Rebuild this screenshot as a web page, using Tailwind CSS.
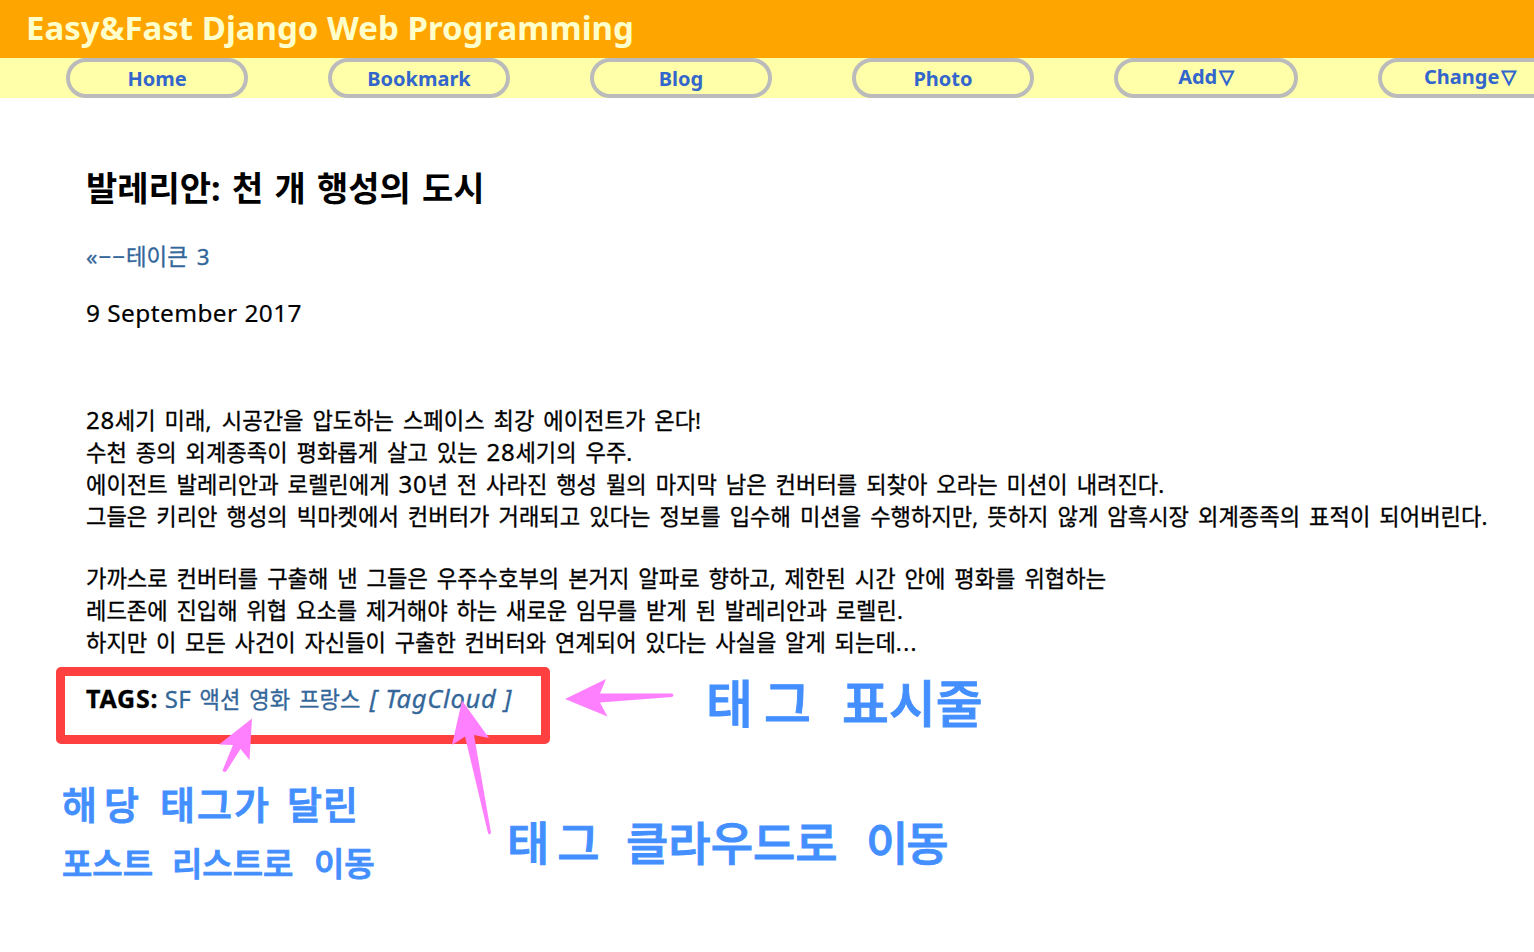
<!DOCTYPE html>
<html lang="ko">
<head>
<meta charset="utf-8">
<title>Easy&amp;Fast Django Web Programming</title>
<script src="https://cdn.jsdelivr.net/npm/@tailwindcss/browser@4"></script>
</head>
<body class="bg-white text-black font-['Noto_Sans','Noto_Sans_CJK_KR',sans-serif] relative w-[1534px] h-[952px] overflow-hidden whitespace-nowrap">
<header class="h-[58px] bg-[#ffa500] pl-[26px]">
  <h1 class="text-[33px] leading-[56px] font-bold text-[#ffffcc]">Easy&amp;Fast Django Web Programming</h1>
</header>
<nav class="h-10 bg-[#ffffaa] pl-[66px] flex gap-20 text-[20px] font-bold text-[#3366cc] leading-[34px] overflow-hidden">
  <a class="w-[182px] h-10 shrink-0 border-4 border-[#bbb] rounded-[20px] text-center">Home</a>
  <a class="w-[182px] h-10 shrink-0 border-4 border-[#bbb] rounded-[20px] text-center">Bookmark</a>
  <a class="w-[182px] h-10 shrink-0 border-4 border-[#bbb] rounded-[20px] text-center">Blog</a>
  <a class="w-[182px] h-10 shrink-0 border-4 border-[#bbb] rounded-[20px] text-center">Photo</a>
  <a class="w-[184px] h-10 shrink-0 border-4 border-[#bbb] rounded-[20px] text-center leading-[30px]">Add<span class="font-['DejaVu_Sans'] text-[19px] leading-none pl-0.5 relative -top-px [-webkit-text-stroke:1px]">▽</span></a>
  <a class="w-[184px] h-10 shrink-0 border-4 border-[#bbb] rounded-[20px] text-center leading-[30px]">Change<span class="font-['DejaVu_Sans'] text-[19px] leading-none pl-0.5 relative -top-px [-webkit-text-stroke:1px]">▽</span></a>
</nav>
<main class="pl-[86px] pt-[66px]">
  <h2 class="h-12 leading-[48px] text-[34px] font-bold [word-spacing:2.4px]">발레리안: 천 개 행성의 도시</h2>
  <p class="mt-[29px] h-8 leading-8 text-[22.4px] text-[#336699] [word-spacing:3px] [-webkit-text-stroke:0.3px]"><span class="tracking-[1px]">«−−</span>테이큰 3</p>
  <p class="mt-6 h-8 leading-8 text-[24.4px] tracking-[0.45px] [-webkit-text-stroke:0.2px]">9 September 2017</p>
  <div class="mt-[76px] text-[22.2px] leading-8 [word-spacing:3.15px] [-webkit-text-stroke:0.3px]">
    <p class="h-8"><span class="text-[24px] leading-none tracking-[0.7px]">28</span>세기 미래<span class="tracking-[1.5px]">,</span> 시공간을 압도하는 스페이스 최강 에이전트가 온다!</p>
    <p class="h-8">수천 종의 외계종족이 평화롭게 살고 있는 <span class="text-[24px] leading-none tracking-[0.7px]">28</span>세기의 우주.</p>
    <p class="h-8">에이전트 발레리안과 로렐린에게 <span class="text-[24px] leading-none tracking-[0.7px]">30</span>년 전 사라진 행성 뮐의 마지막 남은 컨버터를 되찾아 오라는 미션이 내려진다.</p>
    <p class="h-8 [word-spacing:3.25px]">그들은 키리안 행성의 빅마켓에서 컨버터가 거래되고 있다는 정보를 입수해 미션을 수행하지만, 뜻하지 않게 암흑시장 외계종족의 표적이 되어버린다.</p>
    <p class="h-8 mt-[30px]">가까스로 컨버터를 구출해 낸 그들은 우주수호부의 본거지 알파로 향하고, 제한된 시간 안에 평화를 위협하는</p>
    <p class="h-8 [word-spacing:3px]">레드존에 진입해 위협 요소를 제거해야 하는 새로운 임무를 받게 된 발레리안과 로렐린.</p>
    <p class="h-8 [word-spacing:2.9px]">하지만 이 모든 사건이 자신들이 구출한 컨버터와 연계되어 있다는 사실을 알게 되는데<span class="tracking-[1.4px]">...</span></p>
  </div>
  <p class="mt-6 h-8 leading-8 text-[24px] text-[#336699] [-webkit-text-stroke:0.3px]"><b class="text-black text-[25px] leading-none tracking-[0.8px]">TAGS:</b> <span class="tracking-[0.5px]">SF</span> <span class="text-[22.2px] leading-none [word-spacing:3.2px] pl-0.5 pr-[3px]">액션 영화 프랑스</span> <i class="text-[25.5px] leading-none tracking-[0.75px]">[ TagCloud ]</i></p>
</main>
<div class="absolute left-[56px] top-[667px] w-[494px] h-[77px] border-[9px] border-[#ff4040] rounded-[5px]"></div>
<div class="text-[#448fff] font-medium leading-[60px] [-webkit-text-stroke:1px] [stroke-linejoin:round]">
  <p class="absolute left-[706px] top-[673px] text-[51px] flex"><span class="w-[136px] tracking-[11px]">태그</span><span>표시줄</span></p>
  <p class="absolute left-[507px] top-[812px] text-[46px] flex"><span class="w-[119px] tracking-[8px]">태그</span><span class="w-[240px]">클라우드로</span><span class="tracking-[-2px]">이동</span></p>
  <p class="absolute left-[62px] top-[774px] text-[38px] flex"><span class="w-[98px] tracking-[7px]">해당</span><span class="w-[127px] tracking-[2px]">태그가</span><span class="tracking-[1px]">달린</span></p>
  <p class="absolute left-[62px] top-[834px] text-[33px] flex"><span class="w-[110px]">포스트</span><span class="w-[142px]">리스트로</span><span>이동</span></p>
</div>
<svg class="absolute left-0 top-0" width="1534" height="952" fill="#ff80ff">
  <path d="M565 699 606 679 600 693.500 672 693.500Q675 695 672 697L600 702.500 607.500 716.500Z"/>
  <path d="M252 718.500 219 744.500 233 745 222.500 770.500Q224 773 226.500 771L240.500 749 249.500 760Z"/>
  <path d="M462 700.500 452 745 465 736.500 488 833Q490 836 491 832.500L474 735 489 738Z"/>
</svg>
</body>
</html>
